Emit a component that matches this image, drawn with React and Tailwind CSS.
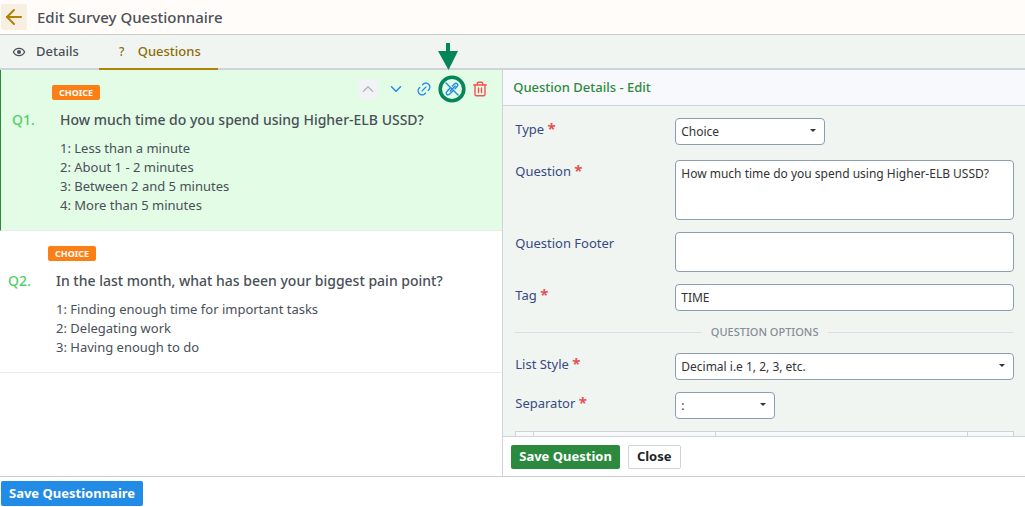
import { ArrowLeft, ChevronUp, ChevronDown } from 'lucide-react';
import { RiLink } from 'react-icons/ri';

const questions = [
  {
    id: 'Q1.',
    title: 'How much time do you spend using Higher-ELB USSD?',
    options: ['Less than a minute', 'About 1 - 2 minutes', 'Between 2 and 5 minutes', 'More than 5 minutes'],
    active: true,
  },
  {
    id: 'Q2.',
    title: 'In the last month, what has been your biggest pain point?',
    options: ['Finding enough time for important tasks', 'Delegating work', 'Having enough to do'],
    active: false,
  },
];

function EyeIcon() {
  return (
    <svg className="h-3 w-3.5" viewBox="0 0 14 12" fill="none" aria-hidden="true">
      <path d="M1.4 6C2.6 3.6 4.6 2.4 7 2.4S11.4 3.6 12.6 6C11.4 8.4 9.4 9.6 7 9.6S2.6 8.4 1.4 6Z" stroke="#495057" strokeWidth="1.3" />
      <circle cx="7" cy="6" r="2" fill="#495057" />
    </svg>
  );
}

function PencilOffIcon() {
  return (
    <svg className="size-4" viewBox="0 0 16 16" fill="none" stroke="currentColor" strokeWidth="1.4" strokeLinecap="round" strokeLinejoin="round" aria-hidden="true">
      <path d="M2 2l12 12" />
      <path d="M6.6 6.6l-3.6 3.8c-.9.9-.9 2.4-.4 3 .6.5 2.100.5 3-.4L9.400 9.400" />
      <path d="M8.400 5l2-2.100c.8-.8 2-.8 2.700-.100.8.8.8 2 0 2.800L11 7.700" />
      <path d="M6.200 10l5-5" />
    </svg>
  );
}

function TrashIcon() {
  return (
    <svg className="size-4" viewBox="0 0 16 16" fill="none" stroke="currentColor" strokeWidth="1.4" strokeLinecap="round" strokeLinejoin="round" aria-hidden="true">
      <path d="M1.700 4h12.600" />
      <path d="M5.300 4V2.300c0-.600.400-1 1-1h3.400c.600 0 1 .400 1 1V4" />
      <path d="M3 4v9.500c0 .700.500 1.200 1.200 1.200h7.600c.700 0 1.200-.500 1.200-1.200V4" />
      <path d="M6.500 7v4.500M9.500 7v4.500" />
    </svg>
  );
}

function Toolbar() {
  return (
    <div className="-mt-0.5 flex items-center gap-2">
      <button type="button" aria-label="Move up" disabled className="flex size-5 items-center justify-center rounded-xs bg-[#f1f3f5] text-[#adb5bd]">
        <ChevronUp size={18} strokeWidth={1.75} />
      </button>
      <button type="button" aria-label="Move down" className="flex size-5 items-center justify-center text-[#228be6]">
        <ChevronDown size={18} />
      </button>
      <button type="button" aria-label="Link" className="flex size-5 items-center justify-center text-[#228be6]">
        <RiLink size={16} />
      </button>
      <div className="relative flex">
        <button type="button" aria-label="Edit question" className="flex size-5 items-center justify-center text-[#228be6]">
          <PencilOffIcon />
        </button>
        <svg className="pointer-events-none absolute -top-9 -left-1 h-16 w-7" viewBox="0 0 28 64" fill="none" aria-hidden="true">
          <path d="M8 0h4v8h8L10.500 27L0 8h8z" fill="#04855a" />
          <circle cx="14" cy="46" r="11.800" stroke="#04855a" strokeWidth="3.600" />
        </svg>
      </div>
      <button type="button" aria-label="Delete" className="flex size-5 items-center justify-center text-[#fa5252]">
        <TrashIcon />
      </button>
    </div>
  );
}

function Question({ id, title, options, active }) {
  return (
    <article className={active ? 'border-b border-l border-b-[#e9ecef] border-l-[#2b8a3e] bg-[#e3fce6] pt-1.5 pr-3 pb-[15px] pl-[11px]' : 'border-b border-[#e9ecef] bg-white pt-1.5 pr-3 pb-[15px] pl-2'}>
      <div className="flex h-7 items-center justify-between pl-10">
        <span className="mt-1 rounded-xs bg-[#fd7e14] px-[7px] text-[9px] leading-[15px] font-bold text-white">CHOICE</span>
        {active && <Toolbar />}
      </div>
      <div className="flex pt-1 text-[14px]">
        <span className="w-12 shrink-0 leading-6 font-medium text-[#51cf66]">{id}</span>
        <div className="text-[#495057]">
          <h2 className="leading-6 font-medium">{title}</h2>
          <ol className="pt-[7px] text-[13px] leading-[19px]">
            {options.map((o, i) => <li key={o}>{i + 1}: {o}</li>)}
          </ol>
        </div>
      </div>
    </article>
  );
}

const box = 'block rounded-[4px] border border-[#8d9db0] bg-white px-[5px] text-[12px] text-[#333333] outline-none';

function Field({ id, label, required, children }) {
  return (
    <div className="flex items-start">
      <label htmlFor={id} className="w-40 shrink-0 text-[13px] leading-[22px] text-[#364a80]">
        {label} {required && <span className="text-[15px] leading-4 font-bold text-[#e55353]">*</span>}
      </label>
      <div className="min-w-0 flex-1">{children}</div>
    </div>
  );
}

function Select({ id, value, width }) {
  return (
    <div className={`relative ${width}`}>
      <select id={id} defaultValue={value} className={`${box} h-[27px] w-full appearance-none`}>
        <option>{value}</option>
      </select>
      <svg className="pointer-events-none absolute top-[11px] right-[9px] h-[3px] w-1.5" viewBox="0 0 6 3" aria-hidden="true">
        <path d="M0 0h6l-3 3z" fill="#333333" />
      </svg>
    </div>
  );
}

export default function App() {
  return (
    <div className="flex h-screen flex-col overflow-hidden bg-white font-['Noto_Sans',sans-serif]">
      <header className="flex h-[35px] shrink-0 items-center gap-2.5 border-b border-[#cccccc] bg-[#fffcf9] pl-px">
        <button type="button" aria-label="Back" className="flex size-[26px] items-center justify-center rounded-xs bg-[#f7efe2] text-[#b08305]">
          <ArrowLeft size={24} />
        </button>
        <h1 className="text-[15px] leading-6 font-medium text-[#495057]">Edit Survey Questionnaire</h1>
      </header>

      <nav className="flex h-[35px] shrink-0 border-b-2 border-[#ced4da] bg-[#f1f5f2] text-[13px] font-medium">
        <button type="button" className="flex h-[33px] items-center gap-2.5 pr-5 pl-3 text-[#495057]">
          <EyeIcon /> Details
        </button>
        <button type="button" className="flex h-[35px] items-center gap-2.5 border-b-2 border-[#b08305] px-[17px] text-[#8f6b05]">
          <span className="w-3 text-center text-[12px]">?</span> Questions
        </button>
      </nav>

      <main className="flex min-h-0 flex-1">
        <section className="w-[49%] shrink-0">
          {questions.map((q) => <Question key={q.id} {...q} />)}
        </section>

        <section className="flex min-w-0 flex-1 flex-col border-l border-[#ced4da]">
          <h2 className="h-9 shrink-0 border-b border-[#ced4da] bg-[#f8f9fc] px-2.5 text-[13px] leading-[35px] font-medium text-[#2b8a3e]">Question Details - Edit</h2>
          <div className="flex min-h-0 flex-1 flex-col gap-3 overflow-hidden bg-[#f1f5f2] pt-3 pr-[11px] pl-3">
            <div className="pb-[3px]">
              <Field id="type" label="Type" required><Select id="type" value="Choice" width="w-[150px]" /></Field>
            </div>
            <Field id="question" label="Question" required>
              <textarea id="question" className={`${box} h-[60px] w-full resize-none py-1 leading-[18px]`} defaultValue="How much time do you spend using Higher-ELB USSD?" />
            </Field>
            <Field id="footer" label="Question Footer">
              <textarea id="footer" className={`${box} h-10 w-full resize-none py-1 leading-[18px]`} />
            </Field>
            <Field id="tag" label="Tag" required>
              <input id="tag" className={`${box} h-[27px] w-full`} defaultValue="TIME" />
            </Field>
            <div className="flex items-center gap-2.5 py-px text-[11px] leading-4 font-medium text-[#868e96]">
              <span className="h-px flex-1 bg-[#d9dfe6]" />QUESTION OPTIONS<span className="h-px flex-1 bg-[#d9dfe6]" />
            </div>
            <Field id="list" label="List Style" required><Select id="list" value="Decimal i.e 1, 2, 3, etc." width="w-full" /></Field>
            <Field id="separator" label="Separator" required><Select id="separator" value=":" width="w-[100px]" /></Field>
            <table className="w-full table-fixed border-collapse bg-[#f8f9fc]">
              <tbody>
                <tr className="h-8">
                  <td className="w-[18px] border border-[#ced4da]" />
                  <td className="w-[182px] border border-[#ced4da]" />
                  <td className="border border-[#ced4da]" />
                  <td className="w-[46px] border border-[#ced4da]" />
                </tr>
              </tbody>
            </table>
          </div>
          <footer className="flex h-10 shrink-0 items-center gap-2 border-t border-[#ced4da] bg-white px-2 text-[13px] font-bold">
            <button type="button" className="h-6 rounded-xs bg-[#2b8a3e] px-2 text-white">Save Question</button>
            <button type="button" className="h-6 rounded-xs border border-[#ced4da] bg-white px-2 text-[#212529]">Close</button>
          </footer>
        </section>
      </main>

      <footer className="h-[31px] shrink-0 border-t border-[#cccccc] px-px pt-1">
        <button type="button" className="block h-[25px] rounded-xs bg-[#228be6] px-2 text-[13px] font-bold text-white">Save Questionnaire</button>
      </footer>
    </div>
  );
}
